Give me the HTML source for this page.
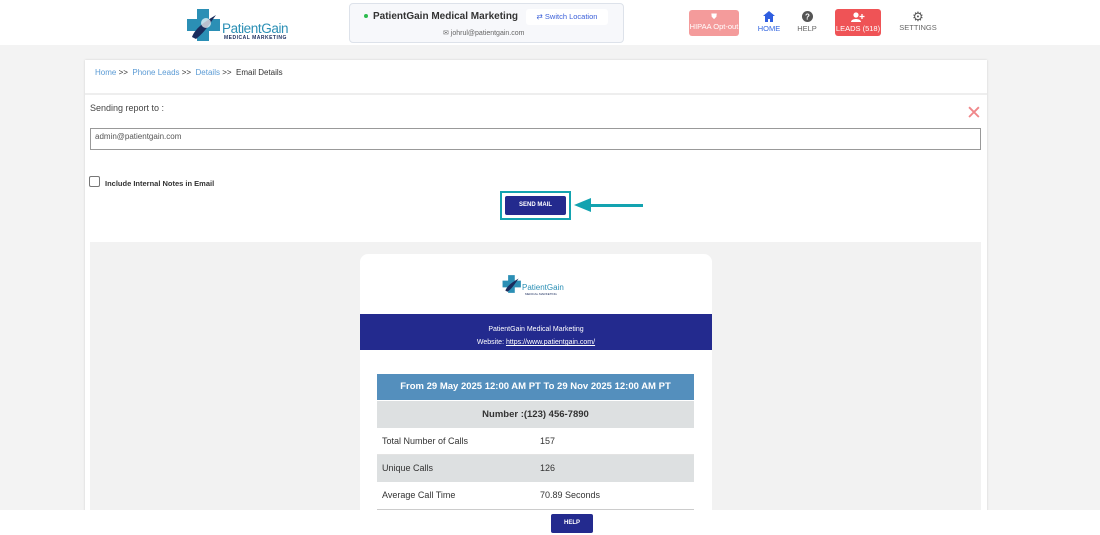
<!DOCTYPE html>
<html><head><style>
*{box-sizing:border-box;margin:0;padding:0}
body{width:1100px;height:535px;overflow:hidden;background:#f3f3f3;font-family:"Liberation Sans",sans-serif;position:relative}
.abs{position:absolute}
</style></head><body>
<div class="abs" style="left:0;top:0;width:1100px;height:45px;background:#fff"></div>
<!-- logo -->
<svg class="abs" style="left:186px;top:7px" width="36" height="36" viewBox="0 0 36 36"><path d="M11 2h12v10h11v12H23v10H11V24H1V12h10z" fill="#2b8fb5"/><path d="M6 30c4-10 14-16 24-22-6 8-10 16-20 24z" fill="#1a2c5c"/><circle cx="20" cy="16" r="5" fill="#fff" opacity=".7"/></svg>
<div class="abs" style="left:222px;top:21px;font-size:13.5px;color:#2b8fb5;letter-spacing:-0.4px">PatientGain</div>
<div class="abs" style="left:224px;top:35px;font-size:5px;color:#1a2c5c;letter-spacing:0.5px;font-weight:bold">MEDICAL MARKETING</div>
<!-- location box -->
<div class="abs" style="left:349px;top:3px;width:275px;height:40px;background:#f7f8fb;border:1px solid #dde2ea;border-radius:4px"></div>
<div class="abs" style="left:364px;top:14px;width:4px;height:4px;border-radius:50%;background:#2dbb4e"></div>
<div class="abs" style="left:373px;top:11px;font-size:10px;color:#333;font-weight:bold;white-space:nowrap">PatientGain Medical Marketing</div>
<div class="abs" style="left:526px;top:9px;width:82px;height:16px;background:#fff;border-radius:3px;font-size:7.5px;color:#3a5fd9;text-align:center;line-height:16px">⇄ Switch Location</div>
<div class="abs" style="left:443px;top:29px;font-size:7px;color:#666">✉ johrul@patientgain.com</div>
<!-- right nav -->
<div class="abs" style="left:689px;top:10px;width:50px;height:26px;background:#f49b9b;border-radius:3px;color:#fff;font-size:7.5px;text-align:center;padding-top:2px">⛊<br>HIPAA Opt-out</div>
<div class="abs" style="left:754px;top:11px;width:30px;text-align:center;color:#3366e0;font-size:7.5px"><svg width="12" height="11" viewBox="0 0 12 11"><path d="M6 0L0 5h2v6h3V8h2v3h3V5h2z" fill="#2f5ee0"/></svg><br>HOME</div>
<div class="abs" style="left:794px;top:11px;width:26px;text-align:center;color:#666;font-size:7.5px"><svg width="11" height="11"><circle cx="5.5" cy="5.5" r="5.5" fill="#555"/><text x="5.5" y="8.5" font-size="8" fill="#fff" text-anchor="middle" font-family="Liberation Sans" font-weight="bold">?</text></svg><br>HELP</div>
<div class="abs" style="left:835px;top:9px;width:46px;height:27px;background:#ef5356;border-radius:3px;color:#fff;font-size:7.5px;text-align:center;padding-top:3px"><svg width="14" height="10" viewBox="0 0 14 10"><circle cx="5" cy="3" r="2.6" fill="#fff"/><path d="M0 10c0-4 10-4 10 0z" fill="#fff"/><path d="M11 2v5M8.5 4.5h5" stroke="#fff" stroke-width="1.3"/></svg><br>LEADS (518)</div>
<div class="abs" style="left:898px;top:11px;width:40px;text-align:center;color:#666;font-size:7.5px"><span style="font-size:13px;line-height:12px;color:#555">⚙</span><br>SETTINGS</div>
<!-- main card -->
<div class="abs" style="left:85px;top:60px;width:902px;height:475px;background:#fff;box-shadow:0 0 2px rgba(0,0,0,.15)"></div>
<div class="abs" style="left:85px;top:93px;width:902px;height:2px;background:#eee"></div>
<div class="abs" style="left:95px;top:68px;font-size:8px;color:#333"><span style="color:#5b9bd5">Home</span> &gt;&gt; &nbsp;<span style="color:#5b9bd5">Phone Leads</span> &gt;&gt; &nbsp;<span style="color:#5b9bd5">Details</span> &gt;&gt; &nbsp;Email Details</div>
<div class="abs" style="left:90px;top:103px;font-size:9px;color:#444">Sending report to :</div>
<div class="abs" style="left:966px;top:104px;font-size:19px;color:#f0878a;line-height:19px">✕</div>
<div class="abs" style="left:90px;top:128px;width:891px;height:22px;border:1px solid #999;font-size:8px;color:#555;padding:3px 4px">admin@patientgain.com</div>
<div class="abs" style="left:89px;top:176px;width:11px;height:11px;border:1px solid #777;border-radius:2px"></div>
<div class="abs" style="left:105px;top:179px;font-size:7.5px;color:#333;font-weight:bold">Include Internal Notes in Email</div>
<div class="abs" style="left:500px;top:191px;width:71px;height:29px;border:2px solid #13a3b0"></div>
<div class="abs" style="left:505px;top:196px;width:61px;height:19px;background:#232a8e;border-radius:2px;color:#fff;font-size:6px;font-weight:bold;text-align:center;line-height:19px">SEND MAIL</div>
<div class="abs" style="left:590px;top:204px;width:53px;height:3px;background:#13a3b0"></div>
<div class="abs" style="left:574px;top:198px;width:0;height:0;border-top:7.5px solid transparent;border-bottom:7.5px solid transparent;border-right:17px solid #13a3b0"></div>
<!-- preview -->
<div class="abs" style="left:90px;top:242px;width:891px;height:293px;background:#f2f2f2"></div>
<div class="abs" style="left:360px;top:254px;width:352px;height:281px;background:#fff;border-radius:8px"></div>
<svg class="abs" style="left:502px;top:272px" width="20" height="24" viewBox="0 0 36 36"><path d="M11 2h12v10h11v12H23v10H11V24H1V12h10z" fill="#2b8fb5"/><path d="M6 30c4-10 14-16 24-22-6 8-10 16-20 24z" fill="#1a2c5c"/></svg>
<div class="abs" style="left:522px;top:283px;font-size:8px;color:#2b8fb5">PatientGain</div>
<div class="abs" style="left:525px;top:292px;font-size:3px;color:#1a2c5c">MEDICAL MARKETING</div>
<div class="abs" style="left:360px;top:314px;width:352px;height:36px;background:#232a8e;color:#fff;font-size:7px;text-align:center;padding-top:9px;line-height:13px">PatientGain Medical Marketing<br>Website: <u>https://www.patientgain.com/</u></div>
<div class="abs" style="left:377px;top:374px;width:317px;height:26px;background:#548fbd;color:#fff;font-size:9.5px;font-weight:bold;text-align:center;line-height:26px">From 29 May 2025 12:00 AM PT To 29 Nov 2025 12:00 AM PT</div>
<div class="abs" style="left:377px;top:401px;width:317px;height:27px;background:#dde0e1;color:#333;font-size:9.5px;font-weight:bold;text-align:center;line-height:27px">Number :(123) 456-7890</div>
<div class="abs" style="left:377px;top:428px;width:317px;height:27px;font-size:9px;color:#333;line-height:27px;padding-left:5px;border-bottom:1px solid #e3e3e3">Total Number of Calls<span class="abs" style="left:163px">157</span></div>
<div class="abs" style="left:377px;top:455px;width:317px;height:27px;background:#dde0e1;font-size:9px;color:#333;line-height:27px;padding-left:5px">Unique Calls<span class="abs" style="left:163px">126</span></div>
<div class="abs" style="left:377px;top:482px;width:317px;height:28px;font-size:9px;color:#333;line-height:27px;padding-left:5px;border-bottom:1px solid #ccc">Average Call Time<span class="abs" style="left:163px">70.89 Seconds</span></div>
<!-- footer -->
<div class="abs" style="left:0;top:510px;width:1100px;height:25px;background:#fff"></div>
<div class="abs" style="left:551px;top:514px;width:42px;height:19px;background:#232a8e;border-radius:2px;color:#fff;font-size:6px;font-weight:bold;text-align:center;line-height:19px">HELP</div>
</body></html>
